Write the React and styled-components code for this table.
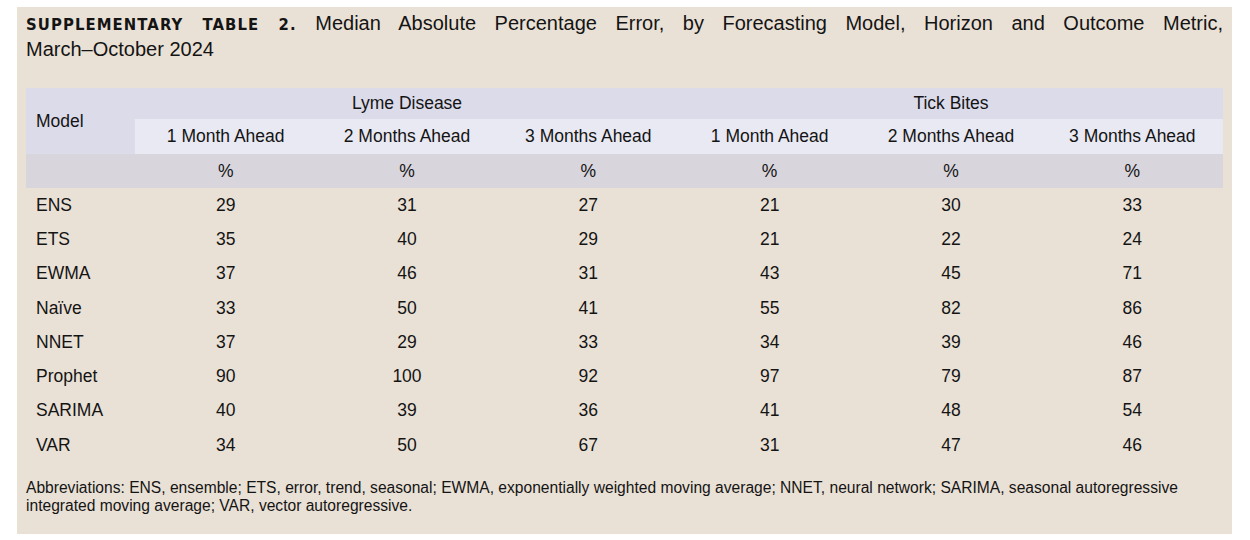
import React from "react";
import styled, { createGlobalStyle } from "styled-components";

const rows = [
  ["ENS", 29, 31, 27, 21, 30, 33],
  ["ETS", 35, 40, 29, 21, 22, 24],
  ["EWMA", 37, 46, 31, 43, 45, 71],
  ["Naïve", 33, 50, 41, 55, 82, 86],
  ["NNET", 37, 29, 33, 34, 39, 46],
  ["Prophet", 90, 100, 92, 97, 79, 87],
  ["SARIMA", 40, 39, 36, 41, 48, 54],
  ["VAR", 34, 50, 67, 31, 47, 46],
];

const horizons = ["1 Month Ahead", "2 Months Ahead", "3 Months Ahead"];

const App = () => {
  return (
    <>
      <GlobalStyle />
      <Panel>
        <Title>
          <Label>SUPPLEMENTARY TABLE 2.</Label> Median Absolute Percentage
          Error, by Forecasting Model, Horizon and Outcome Metric,{" "}
          <NoWrap>March–October 2024</NoWrap>
        </Title>
        <Table>
          <colgroup>
            <col style={{ width: 109 }} />
            {[0, 1, 2, 3, 4, 5].map((i) => (
              <col key={i} />
            ))}
          </colgroup>
          <thead>
            <tr>
              <ModelHead rowSpan={2}>Model</ModelHead>
              <GroupHead colSpan={3}>Lyme Disease</GroupHead>
              <GroupHead colSpan={3}>Tick Bites</GroupHead>
            </tr>
            <tr>
              {[...horizons, ...horizons].map((h, i) => (
                <SubHead key={i}>{h}</SubHead>
              ))}
            </tr>
            <tr>
              <UnitCell />
              {[0, 1, 2, 3, 4, 5].map((i) => (
                <UnitCell key={i}>%</UnitCell>
              ))}
            </tr>
          </thead>
          <tbody>
            {rows.map((r) => (
              <tr key={r[0]}>
                <NameCell>{r[0]}</NameCell>
                {r.slice(1).map((v, i) => (
                  <ValueCell key={i}>{v}</ValueCell>
                ))}
              </tr>
            ))}
          </tbody>
        </Table>
        <Note>
          Abbreviations: ENS, ensemble; ETS, error, trend, seasonal; EWMA,
          exponentially weighted moving average; NNET, neural network; SARIMA,
          seasonal autoregressive integrated moving average; VAR, vector
          autoregressive.
        </Note>
      </Panel>
    </>
  );
};

export default App;

const GlobalStyle = createGlobalStyle`
  body {
    margin: 0;
    background: #ffffff;
    font-family: "Liberation Sans", Arial, sans-serif;
    color: #141414;
  }
`;

const Panel = styled.div`
  width: 1215px;
  margin: 7px 0 0 17px;
  padding: 4px 9px 19px 9px;
  box-sizing: border-box;
  background: #eae1d6;
`;

const Title = styled.p`
  margin: 0 0 27px 0;
  font-size: 20px;
  line-height: 24px;
  text-align: justify;
`;

const NoWrap = styled.span`
  white-space: nowrap;
`;

const Label = styled.span`
  font-family: "Liberation Sans Narrow", "DejaVu Sans Condensed", "DejaVu Sans", sans-serif;
  font-stretch: condensed;
  font-weight: bold;
  font-size: 16.5px;
  letter-spacing: 1.1px;
`;

const Table = styled.table`
  width: 100%;
  border-collapse: collapse;
  table-layout: fixed;
  font-size: 17.5px;
`;

const ModelHead = styled.th`
  background: #dcdbea;
  font-weight: normal;
  text-align: left;
  padding: 0 0 0 10px;
  vertical-align: middle;
`;

const GroupHead = styled.th`
  background: #dcdbea;
  font-weight: normal;
  height: 31px;
  padding: 0;
  text-align: center;
`;

const SubHead = styled.th`
  background: #e9e9f3;
  font-weight: normal;
  height: 35px;
  padding: 0;
  text-align: center;
`;

const UnitCell = styled.th`
  background: #d9d5dc;
  font-weight: normal;
  height: 34px;
  padding: 0;
  text-align: center;
`;

const NameCell = styled.td`
  height: 34.3px;
  padding: 0 0 0 10px;
  text-align: left;
`;

const ValueCell = styled.td`
  height: 34.3px;
  padding: 0;
  text-align: center;
`;

const Note = styled.p`
  margin: 17px 0 0 0;
  font-size: 15.6px;
  line-height: 18px;
`;
